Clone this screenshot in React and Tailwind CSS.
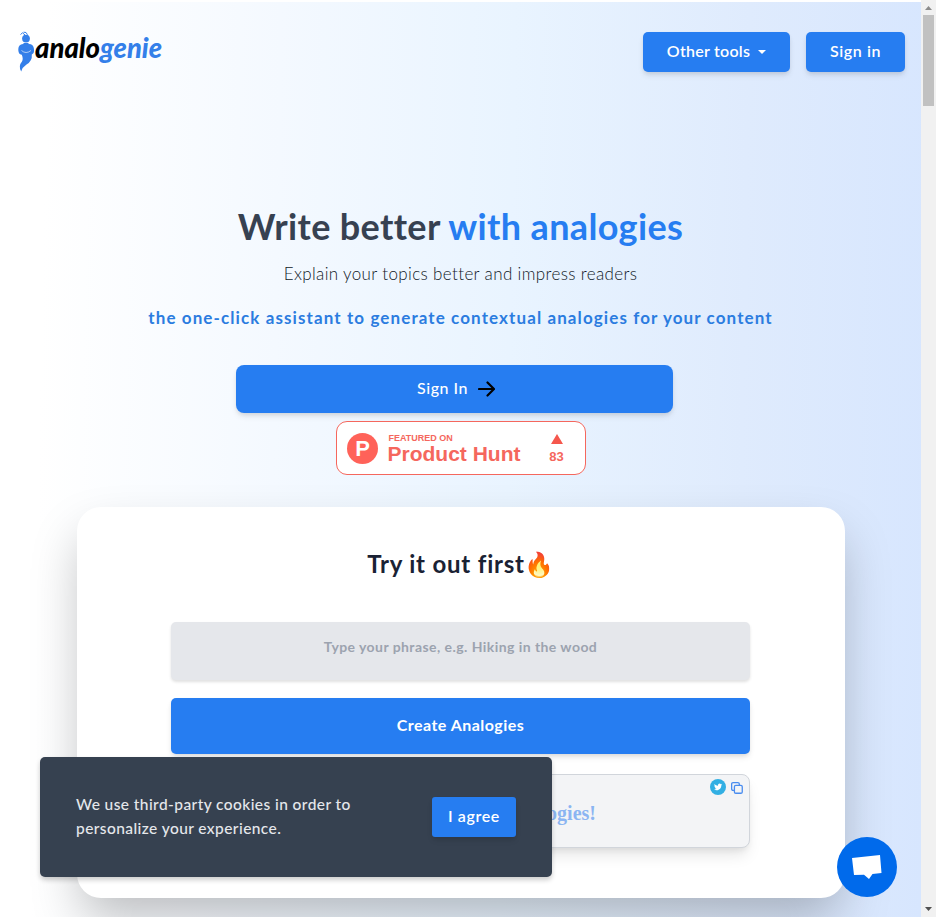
import React from "react";

const buttonBase =
  "flex items-center justify-center bg-[#267df1] text-white shadow-[0_4px_6px_-1px_rgba(0,0,0,0.1),0_2px_4px_-1px_rgba(0,0,0,0.08)]";

function Logo() {
  return (
    <svg width="146" height="44" viewBox="0 0 146 44" role="img" aria-label="analogenie">
      <g fill="#347fe9">
        <circle cx="8" cy="8.6" r="3.9" />
        <path d="M5.6 13H10.4L11 15H5Z" />
        <path d="M5 14Q8 15.5 11 14Q15 14 15.8 18Q17 23 13.8 24.5Q14.5 31 8.5 34.5Q4.5 37 3.2 41.5Q0 36 4 31.5Q5.5 29 3.8 24.8Q0 24.5 .3 19Q.5 14.5 5 14Z" />
      </g>
      <path d="M2.5 4.5L4.5 2.8L7 5M5.5 2.2Q8.5 1.5 9.5 4.8" fill="none" stroke="#347fe9" strokeWidth="1" />
      <path d="M3.5 20.5Q8 24.5 13 20.5" fill="none" stroke="#fff" strokeWidth=".6" />
      <g fontFamily="Lato, sans-serif" fontSize="29" fontStyle="italic" fontWeight="900">
        <text x="17" y="28" textLength="65" lengthAdjust="spacingAndGlyphs" fill="#000">analo</text>
        <text x="82" y="28" textLength="62" lengthAdjust="spacingAndGlyphs" fill="#347fe9">genie</text>
      </g>
    </svg>
  );
}

function Header() {
  return (
    <header className="flex h-[102px] items-start justify-between pl-[18px] pr-4 pt-[30px]">
      <Logo />
      <nav className="flex gap-4 pt-[2px] text-base font-semibold">
        <button className={`${buttonBase} h-10 w-[147px] rounded-[5px] pb-[3px]`}>
          <span className="tracking-[0.25px]">Other tools</span>
          <svg className="ml-[8px] mt-[3px]" width="8" height="4" viewBox="0 0 8 4"><path d="M0 0H8L4 4Z" fill="#fff" /></svg>
        </button>
        <button className={`${buttonBase} h-10 w-[99px] rounded-[5px] pb-[3px] tracking-[0.6px]`}>Sign in</button>
      </nav>
    </header>
  );
}

function ProductHunt() {
  return (
    <div className="mt-2 flex h-[54px] w-[250px] items-center rounded-[11px] border border-[#f5675d] bg-white pl-[10px] font-['Liberation_Sans',sans-serif] font-bold text-[#f5675d]">
      <span className="flex size-[31px] items-center justify-center rounded-full bg-[#ff6259] pt-[2px] pl-px text-[22px] leading-none text-white">P</span>
      <div className="ml-[10px] w-[135px] whitespace-nowrap pt-[2px]">
        <div className="pl-px text-[9px] leading-[10px]">FEATURED ON</div>
        <div className="text-[21px] leading-[22px]">Product Hunt</div>
      </div>
      <div className="ml-[24px] flex w-5 flex-col items-center pt-[2px]">
        <svg width="12" height="10" viewBox="0 0 12 10"><path d="M6 0L12 10H0Z" fill="#f5574d" /></svg>
        <span className="mt-[5px] text-[13px] leading-[15px]">83</span>
      </div>
    </div>
  );
}

function Hero() {
  return (
    <section className="flex flex-col items-center pt-[98px]">
      <h1 className="h-[50px] whitespace-nowrap text-[36px] font-bold leading-[52px] tracking-[0.35px] text-[#374151]">
        Write better <span className="text-[#267df1]">with analogies</span>
      </h1>
      <p className="mt-[10px] h-7 whitespace-nowrap text-[17px] font-light leading-7 tracking-[0.36px] text-[#111827]">
        Explain your topics better and impress readers
      </p>
      <p className="mt-4 h-7 whitespace-nowrap text-[17px] font-bold leading-7 tracking-[1.1px] text-[#2b7ce0]">
        the one-click assistant to generate contextual analogies for your content
      </p>
      <button className={`${buttonBase} mr-[12px] mt-[33px] h-12 w-[437px] rounded-lg pl-[3px]`}>
        <span className="pb-[2px] text-base font-medium tracking-[0.5px]">Sign In</span>
        <svg className="ml-[10px]" width="17" height="16" viewBox="0 0 17 16" fill="none" stroke="#000" strokeWidth="2.2" strokeLinecap="round" strokeLinejoin="round">
          <path d="M1 8H16M9.5 1.5L16 8L9.5 14.5" />
        </svg>
      </button>
      <ProductHunt />
    </section>
  );
}

function Demo() {
  return (
    <section className="mx-auto mt-8 flex h-[391px] w-[768px] flex-col items-center rounded-3xl bg-white pt-[42px] shadow-[0_25px_50px_-5px_rgba(0,0,0,0.25)]">
      <h2 className="flex h-8 items-center whitespace-nowrap text-2xl font-bold tracking-[0.8px] text-[#1a2234]">
        <span className="-mt-[2px]">Try it out first</span>
        <span className="-mt-px w-[29px] font-['Noto_Color_Emoji'] text-[24px] tracking-normal">🔥</span>
      </h2>
      <div className="mt-[41px] flex h-[58px] w-[579px] justify-center rounded-[5px] bg-[#e5e7eb] pt-[15px] text-[14px] font-bold leading-5 tracking-[0.44px] text-[#9ca3af] shadow-[0_2px_3px_rgba(0,0,0,0.12)]">
        Type your phrase, e.g. Hiking in the wood
      </div>
      <button className={`${buttonBase} mt-[18px] h-14 w-[579px] rounded-[5px] pb-[3px] text-base font-bold tracking-[0.45px]`}>Create Analogies</button>
      <div className="mt-5 flex h-[74px] w-[579px] justify-end rounded-lg border border-[#d1d5db] bg-[#f3f4f6] pr-[6px] shadow-[0_10px_15px_-3px_rgba(0,0,0,0.1),0_4px_6px_-2px_rgba(0,0,0,0.07)]">
        <p className="mt-[24px] whitespace-nowrap font-['Liberation_Serif',serif] text-[20px] font-bold leading-7 text-[#8bb5f2]">analogies!</p>
        <div className="ml-[114px] flex items-start gap-[5px] pt-1">
          <svg width="16" height="16" viewBox="0 0 16 16">
            <circle cx="8" cy="8" r="8" fill="#32afe3" />
            <path transform="translate(4 3.9) scale(.34)" fill="#fff" d="M23.95 4.57a10 10 0 0 1-2.82.77 4.96 4.96 0 0 0 2.16-2.72c-.95.55-2 .96-3.13 1.18a4.92 4.92 0 0 0-8.38 4.48C7.69 8.1 4.07 6.13 1.64 3.16a4.92 4.92 0 0 0 1.52 6.57 4.9 4.9 0 0 1-2.23-.61v.06a4.92 4.92 0 0 0 3.95 4.83 5 5 0 0 1-2.21.08 4.94 4.94 0 0 0 4.6 3.42A9.87 9.87 0 0 1 0 19.54a13.99 13.99 0 0 0 7.56 2.21c9.05 0 13.99-7.5 13.99-13.98 0-.21 0-.42-.02-.63a9.94 9.94 0 0 0 2.46-2.55Z" />
          </svg>
          <svg className="mt-[3px]" width="12" height="12" viewBox="0 0 13 13" fill="none" stroke="#498cef" strokeWidth="1.4">
            <rect x="3.7" y="3.7" width="8.5" height="8.5" rx="1.5" />
            <path d="M3.5 9H2.2Q.7 9 .7 7.5V2.2Q.7.7 2.2.7H7.5Q9 .7 9 2.2V3.5" />
          </svg>
        </div>
      </div>
    </section>
  );
}

function CookieNotice() {
  return (
    <aside className="absolute left-10 top-[757px] flex h-[120px] w-[512px] items-center justify-between rounded-[5px] bg-[#364150] px-9 shadow-[0_3px_5px_rgba(0,0,0,0.2)]">
      <p className="whitespace-nowrap pb-[2px] text-[15.5px] font-medium leading-6 tracking-[0.42px] text-[#e5e7eb]">
        We use third-party cookies in order to<br />personalize your experience.
      </p>
      <button className={`${buttonBase} h-10 w-[84px] rounded-[3px] pb-[2px] text-base font-semibold tracking-[0.6px]`}>I agree</button>
    </aside>
  );
}

function Scrollbar() {
  return (
    <div className="flex w-[15px] flex-col items-center bg-[#f1f1f1]">
      <svg className="mt-[6px]" width="7" height="4" viewBox="0 0 7 4"><path d="M3.5 0L7 4H0Z" fill="#8b8b8b" /></svg>
      <div className="mt-[5px] h-[91px] w-[11px] bg-[#c1c1c1]" />
      <svg className="mb-[6px] mt-auto" width="7" height="4" viewBox="0 0 7 4"><path d="M0 0H7L3.5 4Z" fill="#505050" /></svg>
    </div>
  );
}

export default function App() {
  return (
    <div className="relative flex h-[917px] w-[936px] overflow-hidden bg-white font-[Lato,sans-serif]">
      <main className="mt-[2px] h-[915px] w-[921px] overflow-hidden bg-[linear-gradient(91deg,#ffffff_5%,#f4f9ff_30%,#e9f4ff_55%,#dfebfd_80%,#d7e6fe_100%)]">
        <div className="-mt-[2px]">
          <Header />
          <Hero />
          <Demo />
        </div>
      </main>
      <Scrollbar />
      <CookieNotice />
      <button aria-label="Open chat" className="absolute left-[837px] top-[837px] flex size-[60px] items-center justify-center rounded-full bg-[#006aeb]">
        <svg width="30" height="26" viewBox="0 0 30 26"><path d="M0 4L28 1L29.5 19L20.5 20L17 25L12 20.7L2 21Z" fill="#fff" /></svg>
      </button>
    </div>
  );
}
